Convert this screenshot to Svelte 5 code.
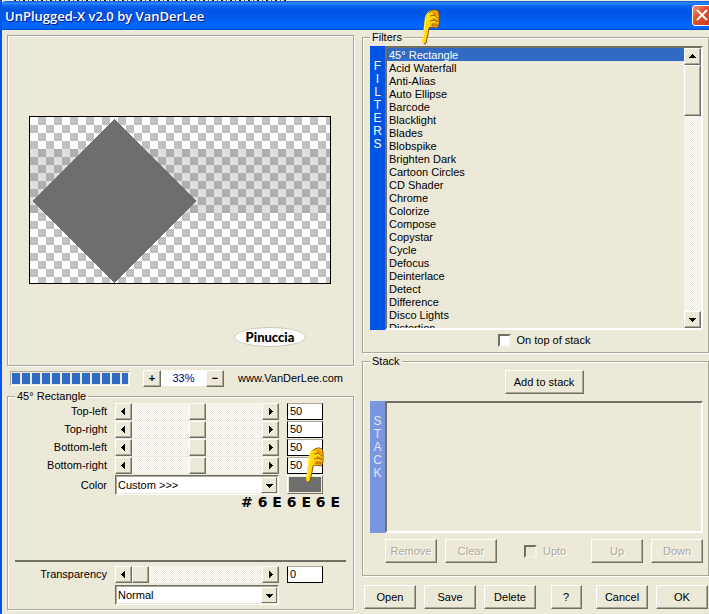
<script>
  const filters = [
    "45° Rectangle", "Acid Waterfall", "Anti-Alias", "Auto Ellipse", "Barcode",
    "Blacklight", "Blades", "Blobspike", "Brighten Dark", "Cartoon Circles",
    "CD Shader", "Chrome", "Colorize", "Compose", "Copystar", "Cycle",
    "Defocus", "Deinterlace", "Detect", "Difference", "Disco Lights", "Distortion",
  ];

  let sliders = [
    { id: "top-left", label: "Top-left", value: 50 },
    { id: "top-right", label: "Top-right", value: 50 },
    { id: "bottom-left", label: "Bottom-left", value: 50 },
    { id: "bottom-right", label: "Bottom-right", value: 50 },
  ];

  let transparency = [{ id: "transparency", label: "Transparency", value: 0 }];

  let selected = filters[0];
  let zoom = "33%";
  let onTop = false;
  let upto = false;

  function clamp(v) {
    return Math.max(0, Math.min(100, v));
  }

  function changeZoom(step) {
    zoom = Math.max(1, parseInt(zoom) + step) + "%";
  }
</script>

{#snippet arrow(dir)}
  <svg class="arrow {dir}" width="7" height="7" viewBox="0 0 7 7" shape-rendering="crispEdges" aria-hidden="true">
    <path d="M0 2h7v1H6v1H5v1H4v1H3V5H2V4H1V3H0z" />
  </svg>
{/snippet}

{#snippet hand()}
  <svg class="hand" width="20" height="36" viewBox="0 0 20 36" aria-hidden="true">
    <path d="M4 8C6 3 9 1 12 1c4 0 6 2 6 5v9l-2 4-5-1-3 1-1 6-2 9-2 1-2-2 1-8c1-6 1-12 2-17z" fill="#ffd90a" />
    <path d="M5 9L3 22 2 32" fill="none" stroke="#fff35c" stroke-width="1" />
    <path d="M8 4c2-3 6-4 9-2l1 4v9l-2 4-5-1-3 1-1 6-2 9-2 1" fill="none" stroke="#8a5200" stroke-width="1" />
    <path d="M10 3l4-1 3 3v2l-4-1zM11 9l6 1v2l-5-1zM9 14l3 2 1-3 2 3 2-2v3l-3 1-4-1z" fill="#f09600" />
    <path d="M9 7l4-1 4 3M9 12l4-1 4 2M12 14v3M15 14v3" fill="none" stroke="#9a4e00" stroke-width="1" />
  </svg>
{/snippet}

{#snippet sliderRows(rows)}
  {#each rows as row}
    <label class="name" for={row.id}>{row.label}</label>
    <div class="scroll">
      <button class="small" type="button" aria-label="Decrease {row.label}" on:click={() => (row.value = clamp(row.value - 1))}>{@render arrow("left")}</button>
      <input type="range" min="0" max="100" aria-label={row.label} bind:value={row.value} />
      <button class="small" type="button" aria-label="Increase {row.label}" on:click={() => (row.value = clamp(row.value + 1))}>{@render arrow("right")}</button>
    </div>
    <input class="number" id={row.id} type="text" bind:value={row.value} />
  {/each}
{/snippet}

<div class="window">
  <div class="behind"></div>
  <header class="titlebar">
    <h1>UnPlugged-X v2.0 by VanDerLee</h1>
    <button class="close" type="button" aria-label="Close">
      <svg width="19" height="19" viewBox="0 0 19 19" aria-hidden="true">
        <path d="M4 4l10 10M14 4L4 14" stroke="#fff" stroke-width="2" />
      </svg>
    </button>
  </header>

  <main>
    <div class="column">
      <div class="preview">
        <svg class="canvas" width="300" height="166" viewBox="0 0 300 166" role="img" aria-label="Preview">
          <defs>
            <pattern id="checker" width="16" height="16" patternUnits="userSpaceOnUse">
              <rect width="16" height="16" fill="#fff" />
              <path d="M8 0h8v8H8zM0 8h8v8H0z" fill="#c0c0c0" />
            </pattern>
          </defs>
          <rect width="300" height="166" fill="url(#checker)" />
          <rect y="32" width="300" height="64" fill="#707070" fill-opacity="0.22" />
          <path d="M84 2l82 82-82 82L2 84z" fill="#6e6e6e" shape-rendering="crispEdges" />
        </svg>
        <span class="badge">Pinuccia</span>
      </div>

      <div class="tools">
        <progress max="100" value="100" aria-label="Progress"></progress>
        <div class="zoom">
          <button class="small" type="button" aria-label="Zoom in" on:click={() => changeZoom(1)}>+</button>
          <input type="text" aria-label="Zoom" bind:value={zoom} />
          <button class="small" type="button" aria-label="Zoom out" on:click={() => changeZoom(-1)}>−</button>
        </div>
        <a href="http://www.VanDerLee.com">www.VanDerLee.com</a>
      </div>

      <fieldset class="settings">
        <legend>{selected}</legend>
        <div class="rows">
          {@render sliderRows(sliders)}
        </div>
        <div class="rows color">
          <label class="name" for="color">Color</label>
          <div class="combo">
            <select id="color"><option>Custom &gt;&gt;&gt;</option></select>
            <span class="drop">{@render arrow("down")}</span>
          </div>
          <div class="pick">
            <button class="swatch" type="button" aria-label="Pick color"></button>
            {@render hand()}
          </div>
        </div>
        <p class="hex"># 6 E 6 E 6 E</p>
        <hr />
        <div class="rows">
          {@render sliderRows(transparency)}
          <div class="combo blend">
            <select aria-label="Blend mode"><option>Normal</option></select>
            <span class="drop">{@render arrow("down")}</span>
          </div>
        </div>
      </fieldset>
    </div>

    <div class="column">
      <fieldset class="filters">
        <legend>Filters</legend>
        {@render hand()}
        <div class="list">
          <div class="strip">
            {#each "FILTERS" as letter}<span>{letter}</span>{/each}
          </div>
          <div class="box">
            <select size="21" aria-label="Filters" bind:value={selected}>
              {#each filters as filter}
                <option>{filter}</option>
              {/each}
            </select>
            <div class="scrollbar">
              <button class="small" type="button" aria-label="Scroll up">{@render arrow("up")}</button>
              <div class="thumb"></div>
              <button class="small" type="button" aria-label="Scroll down">{@render arrow("down")}</button>
            </div>
          </div>
        </div>
        <label class="check"><input type="checkbox" bind:checked={onTop} />On top of stack</label>
      </fieldset>

      <fieldset class="stack">
        <legend>Stack</legend>
        <div class="top">
          <button class="add" type="button">Add to stack</button>
        </div>
        <div class="list">
          <div class="strip">
            {#each "STACK" as letter}<span>{letter}</span>{/each}
          </div>
          <div class="box"></div>
        </div>
        <div class="actions">
          <button type="button" disabled>Remove</button>
          <button type="button" disabled>Clear</button>
          <label class="check off"><input type="checkbox" disabled bind:checked={upto} />Upto</label>
          <button type="button" disabled>Up</button>
          <button type="button" disabled>Down</button>
        </div>
      </fieldset>

      <div class="footer">
        <div class="group">
          <button type="button">Open</button>
          <button type="button">Save</button>
          <button type="button">Delete</button>
        </div>
        <button class="help" type="button">?</button>
        <div class="group">
          <button type="button">Cancel</button>
          <button type="button">OK</button>
        </div>
      </div>
    </div>
  </main>
</div>

<style>
  :global(body) {
    margin: 0;
    background: #ece9d8;
  }

  .window {
    box-sizing: border-box;
    min-height: 100vh;
    overflow: hidden;
    border-left: 2px solid #0055ea;
    background: #ece9d8;
    color: #000;
    font: 11px/13px "Liberation Sans", Arial, sans-serif;
  }

  .window * {
    box-sizing: border-box;
  }

  button,
  input,
  select {
    margin: 0;
    padding: 0;
    border-radius: 0;
    color: #000;
    font: inherit;
  }

  .behind {
    height: 1px;
    margin-left: -2px;
    background: repeating-linear-gradient(90deg, #222 0 2px, #ece9d8 2px 5px, #555 5px 6px, #ece9d8 6px 9px) 14px 0 / 272px 1px no-repeat #ece9d8;
  }

  .titlebar {
    display: flex;
    align-items: center;
    justify-content: space-between;
    height: 29px;
    margin-left: -2px;
    padding-left: 5px;
    border-top-left-radius: 6px;
    background: linear-gradient(#0a53c8 0, #2b8bff 2px, #0a62ee 5px, #0054e3 9px, #0058ec 16px, #0066ff 24px, #0066ff 27px, #0048c8 29px);
  }

  h1 {
    margin: 0;
    color: #fff;
    font: 600 13px/18px "Trebuchet MS", "Open Sans", sans-serif;
    text-shadow: 1px 1px #0a1883;
  }

  .close {
    width: 21px;
    height: 21px;
    margin-right: -4px;
    border: 1px solid #fff;
    border-radius: 3px;
    background: linear-gradient(135deg, #f0967a, #e0502d 40%, #c93a14);
  }

  .close svg {
    display: block;
  }

  main {
    display: grid;
    grid-template-columns: 1fr 1fr;
    gap: 8px;
    padding-left: 5px;
  }

  .column {
    display: flex;
    flex-direction: column;
    min-width: 0;
  }

  .preview,
  fieldset {
    margin: 0;
    border: 1px solid #aca899;
    box-shadow: inset 1px 1px #fff, 1px 1px #fff;
  }

  .preview {
    display: flex;
    flex-direction: column;
    align-items: center;
    margin-top: 5px;
    padding: 80px 22px 18px 20px;
  }

  .canvas {
    box-sizing: content-box;
    max-width: 100%;
    border: 1px solid #000;
  }

  .badge {
    align-self: flex-end;
    width: 72px;
    margin: 43px 25px 0 0;
    border: 1px solid #ccc8b8;
    border-radius: 50%;
    background: #fff;
    font: 900 13px/18px Lato, sans-serif;
    text-align: center;
  }

  button:not(.close, .small) {
    height: 24px;
    min-width: 52px;
    border: 1px solid;
    border-color: #fff #716f64 #716f64 #fff;
    background: #ece9d8;
    box-shadow: inset -1px -1px #aca899;
  }

  button:disabled {
    color: #aca899;
    text-shadow: 1px 1px #fff;
  }

  .small {
    display: flex;
    flex: none;
    align-items: center;
    justify-content: center;
    width: 17px;
    height: 17px;
    border: 1px solid;
    border-color: #fff #716f64 #716f64 #fff;
    background: #ece9d8;
    box-shadow: inset -1px -1px #aca899;
  }

  .arrow.up {
    transform: rotate(180deg);
  }

  .arrow.left {
    transform: rotate(90deg);
  }

  .arrow.right {
    transform: rotate(-90deg);
  }

  .tools {
    display: flex;
    align-items: center;
    margin-top: 4px;
    padding: 0 11px 0 3px;
  }

  progress {
    width: 120px;
    height: 15px;
    padding: 1px;
    border: 1px solid;
    border-color: #aca899 #fff #fff #aca899;
    background: #ece9d8;
    appearance: none;
  }

  progress::-webkit-progress-bar {
    background: #ece9d8;
  }

  progress::-webkit-progress-value {
    background: repeating-linear-gradient(90deg, #316ac5 0 8px, #ece9d8 8px 10px);
  }

  .zoom {
    display: flex;
    margin: 0 14px 0 13px;
  }

  .zoom .small {
    width: 18px;
    font-weight: bold;
  }

  .zoom input {
    width: 45px;
    height: 16px;
    border: 0;
    background: #fff;
    color: #000080;
    text-align: center;
  }

  a {
    color: #000;
    text-decoration: none;
  }

  fieldset {
    min-width: 0;
  }

  legend {
    padding: 0 2px;
    background: #ece9d8;
  }

  .settings {
    margin-top: 3px;
    padding: 0 7px 4px;
  }

  .rows {
    display: grid;
    grid-template-columns: 92px minmax(0, 1fr) 36px;
    gap: 1px 8px;
    align-items: center;
    padding-right: 23px;
  }

  .name {
    text-align: right;
  }

  .scroll {
    display: flex;
    height: 17px;
    background: repeating-conic-gradient(#fff 0 25%, #ece9d8 0 50%) 0 0 / 2px 2px;
  }

  .scroll input {
    flex: 1;
    min-width: 0;
    height: 17px;
    background: transparent;
    appearance: none;
  }

  .scroll input::-webkit-slider-thumb {
    width: 17px;
    height: 17px;
    border: 1px solid;
    border-color: #fff #716f64 #716f64 #fff;
    background: #ece9d8;
    box-shadow: inset -1px -1px #aca899;
    appearance: none;
  }

  .number {
    width: 36px;
    height: 17px;
    padding: 0 0 2px 2px;
    border: 1px solid #000;
    border-top-color: #aca899;
    background: #fff;
  }

  .color {
    margin-top: 1px;
  }

  .combo {
    position: relative;
    height: 20px;
    border: 1px solid;
    border-color: #716f64 #fff #fff #716f64;
  }

  .combo select {
    width: 100%;
    height: 18px;
    padding: 0 18px 0 1px;
    border: 1px solid;
    border-color: #aca899 #ece9d8 #ece9d8 #aca899;
    background: #fff;
    appearance: none;
  }

  .drop {
    position: absolute;
    top: 1px;
    right: 1px;
    bottom: 1px;
    display: flex;
    align-items: center;
    justify-content: center;
    width: 16px;
    border: 1px solid;
    border-color: #fff #716f64 #716f64 #fff;
    background: #ece9d8;
    pointer-events: none;
  }

  .blend {
    grid-column: 2;
    margin-top: 1px;
  }

  .pick {
    position: relative;
    height: 20px;
  }

  button.swatch:not(.close, .small) {
    width: 36px;
    min-width: 0;
    height: 19px;
    padding: 1px;
    background: #6e6e6e content-box;
    box-shadow: inset 0 0 0 1px #ece9d8;
  }

  .hand {
    position: absolute;
    z-index: 1;
    pointer-events: none;
  }

  .pick .hand {
    bottom: 12px;
    left: 18px;
  }

  .filters > .hand {
    top: -35px;
    left: 58px;
  }

  .hex {
    margin: 0 6px 0 0;
    font: bold 14px/14px "DejaVu Sans", sans-serif;
    text-align: right;
  }

  hr {
    height: 2px;
    margin: 51px 0 4px;
    border: 0;
    background: #716f64;
  }

  .filters {
    position: relative;
    margin-top: 1px;
    padding: 2px 5px 5px 7px;
  }

  .list {
    display: flex;
  }

  .strip {
    display: flex;
    flex-direction: column;
    width: 15px;
    padding-top: 14px;
    background: #0054e3;
    color: #fff;
    font-size: 12px;
    text-align: center;
  }

  .box {
    display: flex;
    flex: 1;
    min-width: 0;
    height: 284px;
    border: 2px solid;
    border-color: #716f64 #fff #fff #716f64;
  }

  .box select {
    flex: 1;
    min-width: 0;
    height: 280px;
    overflow: hidden;
    border: 0;
    outline: 0;
    background: #ece9d8;
  }

  .box option {
    min-height: 13px;
    padding: 1px 2px 0;
    line-height: 12px;
  }

  .box option:checked {
    background: #316ac5 linear-gradient(#316ac5, #316ac5);
    color: #fff !important;
  }

  .scrollbar {
    display: flex;
    flex-direction: column;
    width: 17px;
    background: repeating-conic-gradient(#fff 0 25%, #ece9d8 0 50%) 0 0 / 2px 2px;
  }

  .thumb {
    height: 51px;
    margin-bottom: auto;
    border: 1px solid;
    border-color: #fff #716f64 #716f64 #fff;
    background: #ece9d8;
    box-shadow: inset -1px -1px #aca899;
  }

  .check {
    display: flex;
    align-items: center;
    justify-content: center;
    gap: 6px;
    margin: 4px 0 0 15px;
  }

  .check input {
    width: 13px;
    height: 13px;
    border: 2px solid;
    border-color: #716f64 #f4f2e8 #f4f2e8 #716f64;
    background: #fff;
    appearance: none;
  }

  .check input:checked {
    background: #000;
    box-shadow: inset 0 0 0 2px #fff;
  }

  .check.off {
    margin: 0 auto 0 19px;
    color: #aca899;
    text-shadow: 1px 1px #fff;
  }

  .check.off input {
    background: #ece9d8;
  }

  .stack {
    margin-top: 2px;
    padding: 2px 5px 12px 7px;
  }

  .top {
    display: flex;
    justify-content: center;
    margin: 0 0 7px 15px;
  }

  button.add:not(.close, .small) {
    min-width: 79px;
  }

  .stack .strip {
    background: #7b96e0;
    color: #dfe6fb;
  }

  .stack .box {
    height: 132px;
  }

  .actions {
    display: flex;
    gap: 8px;
    margin: 6px 0 0 15px;
  }

  .footer {
    display: flex;
    justify-content: space-between;
    margin-top: 9px;
    padding: 0 1px 4px 2px;
  }

  .group {
    display: flex;
    gap: 8px;
  }

  button.help:not(.close, .small) {
    min-width: 31px;
  }
</style>
